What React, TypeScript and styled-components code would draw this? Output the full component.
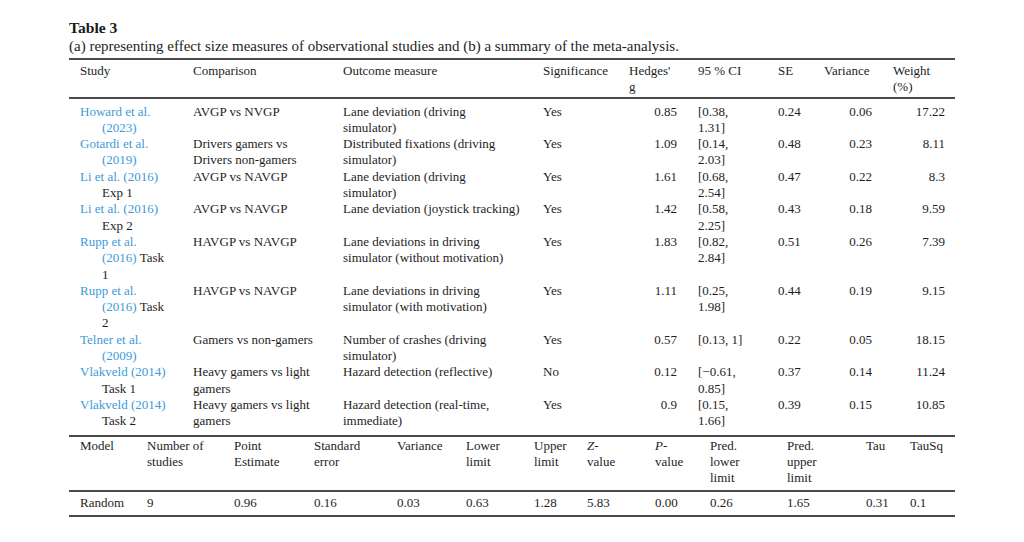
import React from "react";
import styled, { createGlobalStyle } from "styled-components";

const GlobalStyle = createGlobalStyle`
  html, body { margin: 0; padding: 0; background: #ffffff; }
  body {
    font-family: "Liberation Serif", "Times New Roman", serif;
    color: #1e1e1e;
  }
`;

const Page = styled.div`
  width: 886px;
  padding: 19px 0 0 69px;
`;

const Title = styled.div`
  font-weight: bold;
  font-size: 15.6px;
  line-height: 18px;
  color: #1a1a1a;
`;

const Caption = styled.div`
  font-size: 15px;
  line-height: 18px;
  margin-bottom: 3px;
  white-space: nowrap;
`;

const Table = styled.table<{ $top?: boolean; $bodyTop: number; $bodyBottom: number }>`
  width: 886px;
  table-layout: fixed;
  border-collapse: collapse;
  font-size: 13px;
  line-height: 16.3px;
  border-top: ${(p) => (p.$top ? "2px solid #4a4a4a" : "none")};
  border-bottom: 2px solid #4a4a4a;

  thead tr {
    border-bottom: 2px solid #4a4a4a;
  }
  tbody tr:first-child td {
    padding-top: ${(p) => p.$bodyTop}px;
  }
  tbody tr:last-child td {
    padding-bottom: ${(p) => p.$bodyBottom}px;
  }
`;

const Col = styled.col<{ $w: number }>`
  width: ${(p) => p.$w}px;
`;

const Head = styled.th<{ $pt?: number; $pb?: number }>`
  font-weight: normal;
  text-align: left;
  vertical-align: top;
  white-space: nowrap;
  padding: ${(p) => p.$pt ?? 3}px 10px ${(p) => p.$pb ?? 1}px 11px;
`;

const Cell = styled.td<{ $align?: "left" | "right"; $pr?: number }>`
  vertical-align: top;
  text-align: ${(p) => p.$align ?? "left"};
  padding: 0 ${(p) => p.$pr ?? 10}px 0 11px;
`;

const StudyCell = styled.td`
  vertical-align: top;
  padding: 0 10px 0 33px;
  text-indent: -22px;
`;

const Ref = styled.span`
  color: #3d9bd8;
`;

type Row = {
  study: string;
  suffix: string;
  comp: string;
  out: string;
  sig: string;
  g: string;
  ci: string;
  se: string;
  v: string;
  w: string;
};

const rows: Row[] = [
  { study: "Howard et al. (2023)", suffix: "", comp: "AVGP vs NVGP", out: "Lane deviation (driving simulator)", sig: "Yes", g: "0.85", ci: "[0.38, 1.31]", se: "0.24", v: "0.06", w: "17.22" },
  { study: "Gotardi et al. (2019)", suffix: "", comp: "Drivers gamers vs Drivers non-gamers", out: "Distributed fixations (driving simulator)", sig: "Yes", g: "1.09", ci: "[0.14, 2.03]", se: "0.48", v: "0.23", w: "8.11" },
  { study: "Li et al. (2016)", suffix: " Exp 1", comp: "AVGP vs NAVGP", out: "Lane deviation (driving simulator)", sig: "Yes", g: "1.61", ci: "[0.68, 2.54]", se: "0.47", v: "0.22", w: "8.3" },
  { study: "Li et al. (2016)", suffix: " Exp 2", comp: "AVGP vs NAVGP", out: "Lane deviation (joystick tracking)", sig: "Yes", g: "1.42", ci: "[0.58, 2.25]", se: "0.43", v: "0.18", w: "9.59" },
  { study: "Rupp et al. (2016)", suffix: " Task 1", comp: "HAVGP vs NAVGP", out: "Lane deviations in driving simulator (without motivation)", sig: "Yes", g: "1.83", ci: "[0.82, 2.84]", se: "0.51", v: "0.26", w: "7.39" },
  { study: "Rupp et al. (2016)", suffix: " Task 2", comp: "HAVGP vs NAVGP", out: "Lane deviations in driving simulator (with motivation)", sig: "Yes", g: "1.11", ci: "[0.25, 1.98]", se: "0.44", v: "0.19", w: "9.15" },
  { study: "Telner et al. (2009)", suffix: "", comp: "Gamers vs non-gamers", out: "Number of crashes (driving simulator)", sig: "Yes", g: "0.57", ci: "[0.13, 1]", se: "0.22", v: "0.05", w: "18.15" },
  { study: "Vlakveld (2014)", suffix: " Task 1", comp: "Heavy gamers vs light gamers", out: "Hazard detection (reflective)", sig: "No", g: "0.12", ci: "[\u22120.61, 0.85]", se: "0.37", v: "0.14", w: "11.24" },
  { study: "Vlakveld (2014)", suffix: " Task 2", comp: "Heavy gamers vs light gamers", out: "Hazard detection (real-time, immediate)", sig: "Yes", g: "0.9", ci: "[0.15, 1.66]", se: "0.39", v: "0.15", w: "10.85" },
];

const widths1 = [113, 150, 200, 86, 69, 80, 46, 69, 73];
const heads1: React.ReactNode[][] = [
  ["Study"],
  ["Comparison"],
  ["Outcome measure"],
  ["Significance"],
  ["Hedges'", "g"],
  ["95 % CI"],
  ["SE"],
  ["Variance"],
  ["Weight", "(%)"],
];

const widths2 = [67, 87, 80, 83, 69, 68, 53, 68, 55, 77, 79, 44, 56];
const heads2: React.ReactNode[][] = [
  ["Model"],
  ["Number of", "studies"],
  ["Point", "Estimate"],
  ["Standard", "error"],
  ["Variance"],
  ["Lower", "limit"],
  ["Upper", "limit"],
  [<><i>Z</i>-</>, "value"],
  [<><i>P</i>-</>, "value"],
  ["Pred.", "lower", "limit"],
  ["Pred.", "upper", "limit"],
  ["Tau"],
  ["TauSq"],
];
const summary = ["Random", "9", "0.96", "0.16", "0.03", "0.63", "1.28", "5.83", "0.00", "0.26", "1.65", "0.31", "0.1"];

const Lines = ({ lines }: { lines: React.ReactNode[] }) => (
  <>
    {lines.map((l, i) => (
      <React.Fragment key={i}>
        {i > 0 && <br />}
        {l}
      </React.Fragment>
    ))}
  </>
);

export default function App() {
  return (
    <>
      <GlobalStyle />
      <Page>
        <Title>Table 3</Title>
        <Caption>
          (a) representing effect size measures of observational studies and (b) a summary of the meta-analysis.
        </Caption>
        <Table $top $bodyTop={5} $bodyBottom={5}>
          <colgroup>
            {widths1.map((w, i) => (
              <Col key={i} $w={w} />
            ))}
          </colgroup>
          <thead>
            <tr>
              {heads1.map((h, i) => (
                <Head key={i}>
                  <Lines lines={h} />
                </Head>
              ))}
            </tr>
          </thead>
          <tbody>
            {rows.map((r, i) => (
              <tr key={i}>
                <StudyCell>
                  <Ref>{r.study}</Ref>
                  {r.suffix}
                </StudyCell>
                <Cell>{r.comp}</Cell>
                <Cell $pr={11}>{r.out}</Cell>
                <Cell>{r.sig}</Cell>
                <Cell $align="right">{r.g}</Cell>
                <Cell $pr={16}>{r.ci}</Cell>
                <Cell>{r.se}</Cell>
                <Cell $align="right">{r.v}</Cell>
                <Cell $align="right">{r.w}</Cell>
              </tr>
            ))}
          </tbody>
        </Table>
        <Table $bodyTop={3} $bodyBottom={3}>
          <colgroup>
            {widths2.map((w, i) => (
              <Col key={i} $w={w} />
            ))}
          </colgroup>
          <thead>
            <tr>
              {heads2.map((h, i) => (
                <Head key={i} $pt={1} $pb={4}>
                  <Lines lines={h} />
                </Head>
              ))}
            </tr>
          </thead>
          <tbody>
            <tr>
              {summary.map((s, i) => (
                <Cell key={i}>{s}</Cell>
              ))}
            </tr>
          </tbody>
        </Table>
      </Page>
    </>
  );
}
